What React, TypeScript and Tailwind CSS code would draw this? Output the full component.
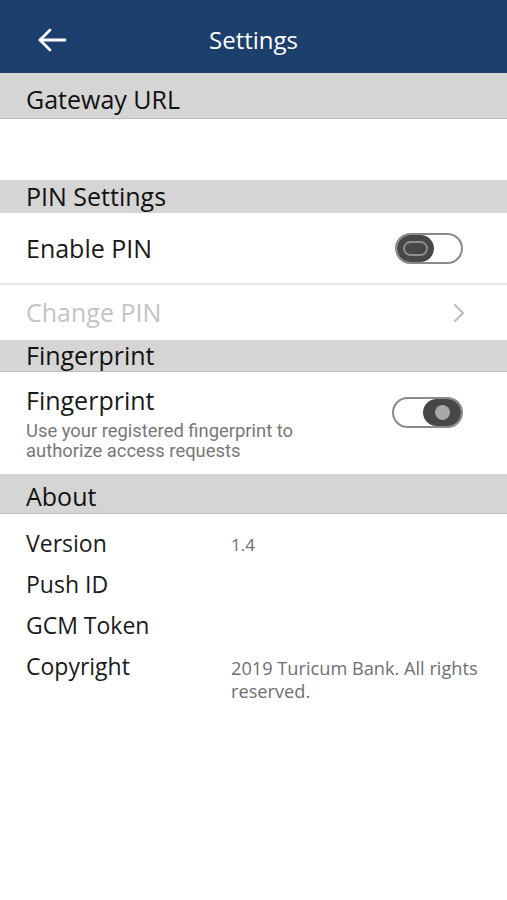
import React from "react";

const font = { fontFamily: '"Open Sans", "Noto Sans", sans-serif' };

function SectionHeader({ title, h, border, pt }: { title: string; h: string; border?: boolean; pt?: string }) {
  return (
    <div className={`${h} bg-[#d5d5d5] flex items-center px-[26px] ${border ? "border-b border-[#bcbcbc]" : ""}`}>
      <span className={`text-[25px] leading-none text-[#111] ${pt ?? ""}`}>{title}</span>
    </div>
  );
}

function ToggleOff() {
  return (
    <div className="w-[68px] h-[31px] rounded-full border-2 border-[#8a8a8a] bg-white relative">
      <div className="absolute left-[0px] top-[0px] w-[37px] h-[27px] rounded-full bg-[#474747] flex items-center justify-center">
        <div className="w-[25px] h-[15px] rounded-full border-2 border-[#8d8d8d]" />
      </div>
    </div>
  );
}

function ToggleOn() {
  return (
    <div className="w-[71px] h-[31px] rounded-full border-2 border-[#8a8a8a] bg-white relative">
      <div className="absolute right-[0px] top-[0px] w-[38px] h-[27px] rounded-full bg-[#474747] flex items-center justify-center">
        <div className="w-[15px] h-[15px] rounded-full bg-[#a9a9a9]" />
      </div>
    </div>
  );
}

export default function App() {
  return (
    <div className="w-[507px] h-[900px] bg-white overflow-hidden" style={font}>
      {/* Top bar */}
      <div className="h-[73px] bg-[#1d3f6e] flex items-center relative">
        <div className="absolute left-[36px] top-[26px]">
          <svg width="32" height="28" viewBox="0 0 32 28" fill="none" stroke="white" strokeWidth="2.8" strokeLinecap="round" strokeLinejoin="round">
            <path d="M29 14H4" />
            <path d="M14 4L4 14L14 24" />
          </svg>
        </div>
        <div className="flex-1 text-center text-white text-[24px] leading-none pt-[7px]">Settings</div>
      </div>

      {/* Gateway URL */}
      <div className="h-[46px] bg-[#d5d5d5] flex items-end pb-[3px] px-[26px] border-b border-[#bcbcbc]">
        <span className="text-[25px] leading-[32px] text-[#111]">Gateway URL</span>
      </div>
      <div className="h-[61px] bg-white" />

      {/* PIN Settings */}
      <SectionHeader title="PIN Settings" h="h-[33px]" />
      <div className="h-[70px] flex items-center justify-between pl-[26px] pr-[44px]">
        <span className="text-[25px] leading-none text-[#1a1a1a]">Enable PIN</span>
        <ToggleOff />
      </div>
      <div className="h-[2px] bg-[#e6e6e6]" />
      <div className="h-[55px] flex items-center justify-between pl-[26px] pr-[42px]">
        <span className="text-[25px] leading-none text-[#c4c4c4]">Change PIN</span>
        <svg width="12" height="20" viewBox="0 0 12 20" fill="none" stroke="#b8b8b8" strokeWidth="2" strokeLinecap="round" strokeLinejoin="round">
          <path d="M2 2L10 10L2 18" />
        </svg>
      </div>

      {/* Fingerprint */}
      <SectionHeader title="Fingerprint" h="h-[32px]" border />
      <div className="h-[102px] flex justify-between pl-[26px] pr-[44px]">
        <div className="pt-[13px]">
          <div className="text-[25px] leading-[30px] text-[#1a1a1a]">Fingerprint</div>
          <div className="text-[18.4px] leading-[20px] text-[#777] mt-[6px]" style={{ fontFamily: 'Roboto, "Noto Sans", sans-serif' }}>
            Use your registered fingerprint to
            <br />
            authorize access requests
          </div>
        </div>
        <div className="pt-[25px]">
          <ToggleOn />
        </div>
      </div>

      {/* About */}
      <SectionHeader title="About" h="h-[40px]" border pt="pt-[5px]" />
      <div className="pt-[9px]">
        {[
          ["Version", "1.4"],
          ["Push ID", ""],
          ["GCM Token", ""],
        ].map(([k, v]) => (
          <div key={k} className="h-[41px] flex items-center px-[26px]">
            <span className="w-[205px] text-[23px] leading-none text-[#1a1a1a]">{k}</span>
            <span className="text-[17px] leading-none text-[#6f6f6f] pt-[2px]">{v}</span>
          </div>
        ))}
        <div className="flex px-[26px] pt-[6px]">
          <span className="w-[205px] text-[23px] leading-[28px] text-[#1a1a1a]">Copyright</span>
          <span className="flex-1 text-[18.2px] leading-[23px] text-[#6f6f6f] pt-[5px]">
            2019 Turicum Bank. All rights
            <br />
            reserved.
          </span>
        </div>
      </div>
    </div>
  );
}
